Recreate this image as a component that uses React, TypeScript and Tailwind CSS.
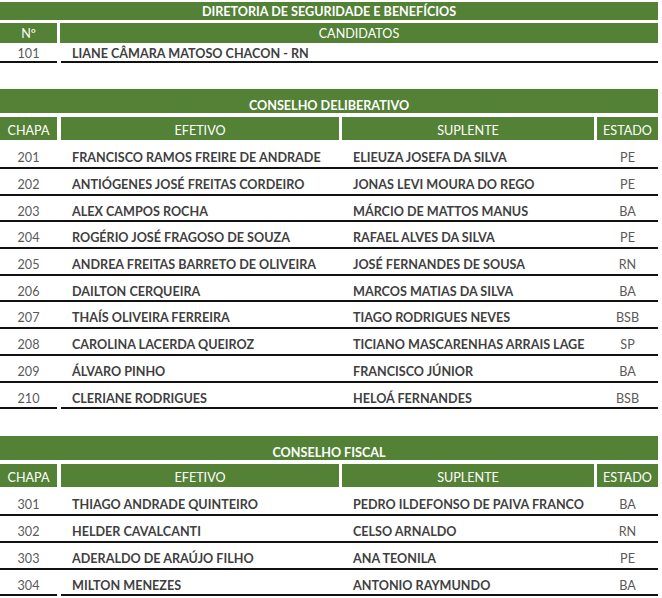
import React from "react";

type Row = { chapa: string; efetivo: string; suplente: string; estado: string };

const deliberativo: Row[] = [
  { chapa: "201", efetivo: "FRANCISCO RAMOS FREIRE DE ANDRADE", suplente: "ELIEUZA JOSEFA DA SILVA", estado: "PE" },
  { chapa: "202", efetivo: "ANTIÓGENES JOSÉ FREITAS CORDEIRO", suplente: "JONAS LEVI MOURA DO REGO", estado: "PE" },
  { chapa: "203", efetivo: "ALEX CAMPOS ROCHA", suplente: "MÁRCIO DE MATTOS MANUS", estado: "BA" },
  { chapa: "204", efetivo: "ROGÉRIO JOSÉ FRAGOSO DE SOUZA", suplente: "RAFAEL ALVES DA SILVA", estado: "PE" },
  { chapa: "205", efetivo: "ANDREA FREITAS BARRETO DE OLIVEIRA", suplente: "JOSÉ FERNANDES DE SOUSA", estado: "RN" },
  { chapa: "206", efetivo: "DAILTON CERQUEIRA", suplente: "MARCOS MATIAS DA SILVA", estado: "BA" },
  { chapa: "207", efetivo: "THAÍS OLIVEIRA FERREIRA", suplente: "TIAGO RODRIGUES NEVES", estado: "BSB" },
  { chapa: "208", efetivo: "CAROLINA LACERDA QUEIROZ", suplente: "TICIANO MASCARENHAS ARRAIS LAGE", estado: "SP" },
  { chapa: "209", efetivo: "ÁLVARO PINHO", suplente: "FRANCISCO JÚNIOR", estado: "BA" },
  { chapa: "210", efetivo: "CLERIANE RODRIGUES", suplente: "HELOÁ FERNANDES", estado: "BSB" },
];

const fiscal: Row[] = [
  { chapa: "301", efetivo: "THIAGO ANDRADE QUINTEIRO", suplente: "PEDRO ILDEFONSO DE PAIVA FRANCO", estado: "BA" },
  { chapa: "302", efetivo: "HELDER CAVALCANTI", suplente: "CELSO ARNALDO", estado: "RN" },
  { chapa: "303", efetivo: "ADERALDO DE ARAÚJO FILHO", suplente: "ANA TEONILA", estado: "PE" },
  { chapa: "304", efetivo: "MILTON MENEZES", suplente: "ANTONIO RAYMUNDO", estado: "BA" },
];

function Conselho({ title, rows }: { title: string; rows: Row[] }) {
  return (
    <div className="flex flex-col">
      <div className="h-[24px] pt-[10px] bg-[#538135] text-white font-bold flex items-center justify-center">
        {title}
      </div>
      <div className="flex gap-[3px] mt-[4px] h-[23px] text-white">
        <div className="w-[57px] pt-[5px] bg-[#538135] flex items-center justify-center">CHAPA</div>
        <div className="w-[278px] ml-[1px] pt-[5px] bg-[#538135] flex items-center justify-center">EFETIVO</div>
        <div className="w-[252px] pt-[5px] bg-[#538135] flex items-center justify-center">SUPLENTE</div>
        <div className="w-[61px] pt-[5px] bg-[#538135] flex items-center justify-center">ESTADO</div>
      </div>
      {rows.map((r, i) => {
        const first = i === 0;
        const last = i === rows.length - 1;
        return (
          <div
            key={r.chapa}
            className={`flex ${first ? "h-[29px] pt-[10px]" : "h-[26.7px] pt-[8px]"} ${last ? "" : "border-b-2 border-[#111]"}`}
          >
            <div className={`w-[57px] flex items-center justify-center text-[#595959] ${last ? "border-b-2 border-[#111]" : ""}`}>
              {r.chapa}
            </div>
            <div className={`flex flex-1 ml-[4px] ${last ? "border-b-2 border-[#111]" : ""}`}>
              <div className="w-[281px] pl-[11px] flex items-center font-bold text-[#3f3f3f]">{r.efetivo}</div>
              <div className="w-[255px] pl-[11px] flex items-center font-bold text-[#3f3f3f]">{r.suplente}</div>
              <div className="w-[61px] flex items-center justify-center text-[#595959]">{r.estado}</div>
            </div>
          </div>
        );
      })}
    </div>
  );
}

export default function App() {
  return (
    <div className="w-[662px] h-[598px] bg-white pt-[2px] pr-[4px] text-[12.6px] leading-none font-['Lato',sans-serif] overflow-hidden">
      {/* Diretoria */}
      <div className="flex flex-col">
        <div className="h-[18px] pt-[3px] bg-[#538135] text-white font-bold flex items-center justify-center">
          DIRETORIA DE SEGURIDADE E BENEFÍCIOS
        </div>
        <div className="flex gap-[3px] mt-[3px] h-[20px] text-white">
          <div className="w-[57px] pt-[2px] bg-[#538135] flex items-center justify-center">Nº</div>
          <div className="flex-1 pt-[2px] bg-[#538135] flex items-center justify-center">CANDIDATOS</div>
        </div>
        <div className="flex h-[20px]">
          <div className="w-[57px] pt-[4px] flex items-center justify-center text-[#595959] border-b-2 border-[#111]">101</div>
          <div className="flex-1 ml-[4px] pl-[11px] pt-[4px] flex items-center font-bold text-[#3f3f3f] border-b-2 border-[#111]">
            LIANE CÂMARA MATOSO CHACON - RN
          </div>
        </div>
      </div>

      <div className="mt-[26px]">
        <Conselho title="CONSELHO DELIBERATIVO" rows={deliberativo} />
      </div>

      <div className="mt-[27px]">
        <Conselho title="CONSELHO FISCAL" rows={fiscal} />
      </div>
    </div>
  );
}
